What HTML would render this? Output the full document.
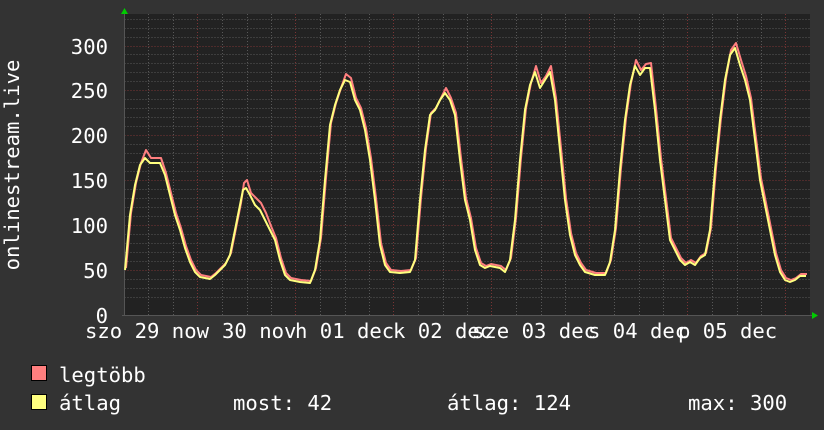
<!DOCTYPE html>
<html><head><meta charset="utf-8"><style>
html,body{margin:0;padding:0;background:#333333;}
svg{display:block}
text{font-family:"DejaVu Sans Mono","Liberation Mono",monospace;font-size:20.6px;fill:#ffffff}
</style></head><body>
<svg width="824" height="430" viewBox="0 0 824 430" xmlns="http://www.w3.org/2000/svg">
<rect width="824" height="430" fill="#333333"/>
<rect x="124" y="14" width="686" height="302" fill="#222222"/>
<g stroke="#585858" stroke-width="1" stroke-dasharray="1,2">
<path d="M124.5 297.5H810M124.5 288.5H810M124.5 279.5H810M124.5 261.5H810M124.5 252.5H810M124.5 243.5H810M124.5 234.5H810M124.5 216.5H810M124.5 207.5H810M124.5 198.5H810M124.5 189.5H810M124.5 171.5H810M124.5 162.5H810M124.5 153.5H810M124.5 144.5H810M124.5 126.5H810M124.5 117.5H810M124.5 108.5H810M124.5 99.5H810M124.5 81.5H810M124.5 72.5H810M124.5 63.5H810M124.5 54.5H810M124.5 37.5H810M124.5 28.5H810M124.5 19.5H810"/>
<path d="M148.5 14V316M173.5 14V316M222.5 14V316M247.5 14V316M271.5 14V316M320.5 14V316M345.5 14V316M369.5 14V316M418.5 14V316M443.5 14V316M467.5 14V316M516.5 14V316M541.5 14V316M565.5 14V316M614.5 14V316M639.5 14V316M663.5 14V316M712.5 14V316M737.5 14V316M761.5 14V316"/>
</g>
<g stroke="#7a3434" stroke-width="1" stroke-dasharray="1,2">
<path d="M124.5 270.5H810M124.5 225.5H810M124.5 180.5H810M124.5 135.5H810M124.5 90.5H810M124.5 46.5H810"/>
<path d="M197.5 14V316M295.5 14V316M393.5 14V316M491.5 14V316M589.5 14V316M687.5 14V316M785.5 14V316"/>
</g>
<path d="M124.5 12V316M122 315.5H812" stroke="#555" stroke-width="1"/>
<path d="M121 14L124.5 8L128 14Z" fill="#00cc00"/>
<path d="M812 312L818 315.5L812 319Z" fill="#00cc00"/>
<g fill="none" stroke-linejoin="round" stroke-width="2">
<polyline stroke="#ff7f7f" transform="translate(1,-2)" points="125,270 130,215 135,185 140,165 145,152 150,160 160,160 165,175 170,195 175,215 180,230 185,248 190,262 195,272 200,277 210,279 215,275 220,270 225,265 230,255 235,230 240,205 243,185 246,182 250,195 255,200 260,205 265,215 270,228 275,240 280,260 285,275 290,280 300,282 310,283 315,270 320,240 325,180 330,125 335,105 340,90 345,76 350,80 355,100 360,110 365,130 370,160 375,200 380,245 385,265 390,272 400,273 410,272 415,260 420,200 425,150 430,115 435,110 440,100 445,90 450,100 455,115 460,160 465,200 470,220 475,250 480,265 485,268 490,266 500,268 505,272 510,260 515,220 520,160 525,110 530,85 535,68 540,85 545,78 550,68 555,100 560,150 565,200 570,235 575,255 580,265 585,272 595,275 605,275 610,262 615,230 620,170 625,120 630,85 635,62 640,72 645,66 650,65 655,110 660,160 665,200 670,240 675,250 680,260 685,265 690,262 695,265 700,258 705,255 710,230 715,170 720,120 725,80 730,52 735,45 740,62 745,78 750,100 755,140 760,180 765,205 770,230 775,255 780,272 785,280 790,282 795,280 800,276 806,276"/>
<polyline stroke="#ffff7f" points="125,270 130,215 135,185 140,165 145,158 150,163 160,163 165,175 170,195 175,215 180,230 185,248 190,262 195,272 200,277 210,279 215,275 220,270 225,265 230,255 235,230 240,205 243,190 246,188 250,195 255,205 260,210 265,220 270,230 275,240 280,260 285,275 290,280 300,282 310,283 315,270 320,240 325,180 330,125 335,105 340,90 345,80 350,82 355,100 360,110 365,130 370,160 375,200 380,245 385,265 390,272 400,273 410,272 415,260 420,200 425,150 430,115 435,110 440,100 445,93 450,100 455,115 460,160 465,200 470,220 475,250 480,265 485,268 490,266 500,268 505,272 510,260 515,220 520,160 525,110 530,85 535,72 540,88 545,80 550,72 555,100 560,150 565,200 570,235 575,255 580,265 585,272 595,275 605,275 610,262 615,230 620,170 625,120 630,85 635,66 640,75 645,68 650,68 655,110 660,160 665,200 670,240 675,250 680,260 685,265 690,262 695,265 700,258 705,255 710,230 715,170 720,120 725,80 730,55 735,48 740,65 745,80 750,100 755,140 760,180 765,205 770,230 775,255 780,272 785,280 790,282 795,280 800,276 806,276"/>
</g>
<g text-anchor="end">
<text x="108" y="323">0</text>
<text x="108" y="278">50</text>
<text x="108" y="233">100</text>
<text x="108" y="188">150</text>
<text x="108" y="143">200</text>
<text x="108" y="98">250</text>
<text x="108" y="54">300</text>
</g>
<text transform="translate(19,165) rotate(-90)" text-anchor="middle">onlinestream.live</text>
<text x="85" y="338">szo 29 now</text>
<text x="222" y="338">30 nov</text>
<text x="295" y="338">h 01 dec</text>
<text x="393" y="338">k 02 dec</text>
<text x="472" y="338">sze 03 dec</text>
<text x="588" y="338">s 04 dec</text>
<text x="678" y="338">p 05 dec</text>
<rect x="31.5" y="365.5" width="15" height="15" fill="#ff7f7f" stroke="#000"/>
<rect x="31.5" y="394.5" width="15" height="15" fill="#ffff7f" stroke="#000"/>
<text x="59" y="382">legtöbb</text>
<text x="59" y="410">átlag</text>
<text x="233" y="410">most: 42</text>
<text x="447" y="410">átlag: 124</text>
<text x="688" y="410">max: 300</text>
</svg>
</body></html>
